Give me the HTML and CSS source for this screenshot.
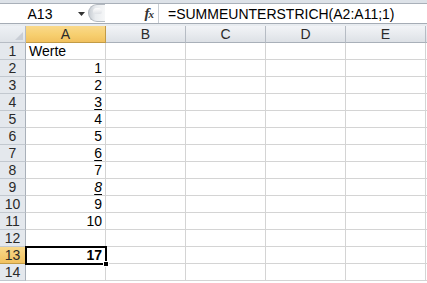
FILE: index.html
```html
<!DOCTYPE html>
<html>
<head>
<meta charset="utf-8">
<link rel="stylesheet" href="styles.css">
</head>
<body>
<div class="app">
  <div class="fbar">
    <div class="namebox">
      <span class="ref">A13</span>
      <svg class="arrow" width="7" height="4" viewBox="0 0 7 4"><path d="M0 0H7L3.5 4Z" fill="#333"/></svg>
    </div>
    <div class="splitter"><div class="knob"><div class="shine"></div></div></div>
    <div class="fxarea"><span class="fx">f<span class="fxx">x</span></span></div>
    <div class="formula">=SUMMEUNTERSTRICH(A2:A11;1)</div>
  </div>
  <div class="gap"></div>
  <div class="sheet">
    <div class="corner"><svg width="8" height="8" viewBox="0 0 8 8"><path d="M8 0V8H0Z" fill="#c9ced6"/></svg></div>
    <div class="ch sel">A</div><div class="ch">B</div><div class="ch">C</div><div class="ch">D</div><div class="ch">E</div><div class="ch"></div>

    <div class="rh">1</div><div class="c">Werte</div><div class="c"></div><div class="c"></div><div class="c"></div><div class="c"></div><div class="c"></div>
    <div class="rh">2</div><div class="c n">1</div><div class="c"></div><div class="c"></div><div class="c"></div><div class="c"></div><div class="c"></div>
    <div class="rh">3</div><div class="c n">2</div><div class="c"></div><div class="c"></div><div class="c"></div><div class="c"></div><div class="c"></div>
    <div class="rh">4</div><div class="c n"><u>3</u></div><div class="c"></div><div class="c"></div><div class="c"></div><div class="c"></div><div class="c"></div>
    <div class="rh">5</div><div class="c n">4</div><div class="c"></div><div class="c"></div><div class="c"></div><div class="c"></div><div class="c"></div>
    <div class="rh">6</div><div class="c n">5</div><div class="c"></div><div class="c"></div><div class="c"></div><div class="c"></div><div class="c"></div>
    <div class="rh">7</div><div class="c n"><u>6</u></div><div class="c"></div><div class="c"></div><div class="c"></div><div class="c"></div><div class="c"></div>
    <div class="rh">8</div><div class="c n">7</div><div class="c"></div><div class="c"></div><div class="c"></div><div class="c"></div><div class="c"></div>
    <div class="rh">9</div><div class="c n"><u><i>8</i></u></div><div class="c"></div><div class="c"></div><div class="c"></div><div class="c"></div><div class="c"></div>
    <div class="rh">10</div><div class="c n">9</div><div class="c"></div><div class="c"></div><div class="c"></div><div class="c"></div><div class="c"></div>
    <div class="rh">11</div><div class="c n">10</div><div class="c"></div><div class="c"></div><div class="c"></div><div class="c"></div><div class="c"></div>
    <div class="rh">12</div><div class="c"></div><div class="c"></div><div class="c"></div><div class="c"></div><div class="c"></div><div class="c"></div>
    <div class="rh sel">13</div><div class="c n active"><b>17</b><span class="handle"></span></div><div class="c"></div><div class="c"></div><div class="c"></div><div class="c"></div><div class="c"></div>
    <div class="rh">14</div><div class="c"></div><div class="c"></div><div class="c"></div><div class="c"></div><div class="c"></div><div class="c"></div>
  </div>
</div>
</body>
</html>
```

FILE: styles.css
```css
* { box-sizing: border-box; }
html, body { margin: 0; padding: 0; background: #fff; overflow: hidden; }
body { font-family: "Liberation Sans", Arial, sans-serif; font-size: 14px; color: #000; }
.app { width: 427px; height: 283px; overflow: hidden; }

.fbar {
  height: 24px;
  display: flex;
  background: #fff;
  border-top: 3px solid #dde2e8;
  border-bottom: 1px solid #a5acb5;
  position: relative;
}
.fbar::before {
  content: "";
  position: absolute; left: 0; right: 0; top: 0; height: 1px; background: #a9b0b9;
}
.namebox {
  width: 88px;
  display: flex; align-items: center;
  padding-top: 1px;
}
.ref { width: 78px; text-align: center; font-size: 14px; padding-left: 2px; }
.splitter { width: 17px; display: flex; align-items: center; }
.knob {
  width: 17px; height: 18px; border-radius: 10px 0 0 10px;
  background: linear-gradient(90deg, #c8cdd3 0%, #e9ecef 40%, #f6f7f8 100%);
  border: 1px solid #b3b9c0; border-right: none;
  position: relative;
}
.shine {
  position: absolute; left: 4px; top: 3px; width: 9px; height: 6px;
  border-radius: 5px 5px 3px 3px;
  background: linear-gradient(#fdfdfd, #dfe2e6);
}
.fxarea {
  width: 53px; display: flex; align-items: center; justify-content: flex-end;
  padding-right: 5px;
}
.fx { font-family: "Liberation Serif", serif; font-style: italic; font-weight: bold; font-size: 15px; color: #333; letter-spacing: -1px; }
.fxx { font-size: 11px; }
.formula {
  flex: 1; border-left: 1px solid #c7cdd4;
  display: flex; align-items: center; padding-left: 9px; padding-top: 1px;
  font-size: 14px; white-space: nowrap;
}
.gap { height: 2px; background: #e8ecf0; }

.sheet {
  display: grid;
  grid-template-columns: 26px repeat(6, 80px);
  grid-auto-rows: 17px;
}
.corner {
  background: linear-gradient(#eef1f5, #dfe3e8);
  border-right: 1px solid #b6bcc4; border-bottom: 1px solid #b6bcc4;
  display: flex; align-items: flex-end; justify-content: flex-end; padding: 0 2px 2px 0;
}
.ch {
  background: linear-gradient(#f2f4f7 0%, #e7eaee 55%, #dde1e6 100%);
  border-right: 1px solid #b6bcc4; border-bottom: 1px solid #a9b0b9;
  text-align: center; line-height: 16px; color: #2a2a2a; font-size: 14px;
}
.ch.sel { background: linear-gradient(#f9d98b 0%, #f7cf6f 55%, #f1c15f 100%); border-bottom-color: #c29b46; border-right-color: #c29b46; }
.rh {
  background: #e4e8ed;
  border-right: 1px solid #a9b0b9; border-bottom: 1px solid #c2c8cf;
  text-align: center; line-height: 16px; color: #2a2a2a; font-size: 14px;
}
.rh.sel { background: linear-gradient(#f9d98b, #f1c15f); border-right-color: #c29b46; border-bottom-color: #c29b46; }
.c {
  border-right: 1px solid #d4d4d4; border-bottom: 1px solid #d4d4d4;
  line-height: 16px; padding: 0 3px 0 3px; white-space: nowrap; position: relative;
}
.n { text-align: right; }
.active {
  outline: 2px solid #000; outline-offset: -1px; z-index: 2;
}
.handle {
  position: absolute; right: -4px; bottom: -4px; width: 6px; height: 6px;
  background: #000; border: 1px solid #fff;
}
u { text-decoration-thickness: 1px; text-underline-offset: 2px; }
```
